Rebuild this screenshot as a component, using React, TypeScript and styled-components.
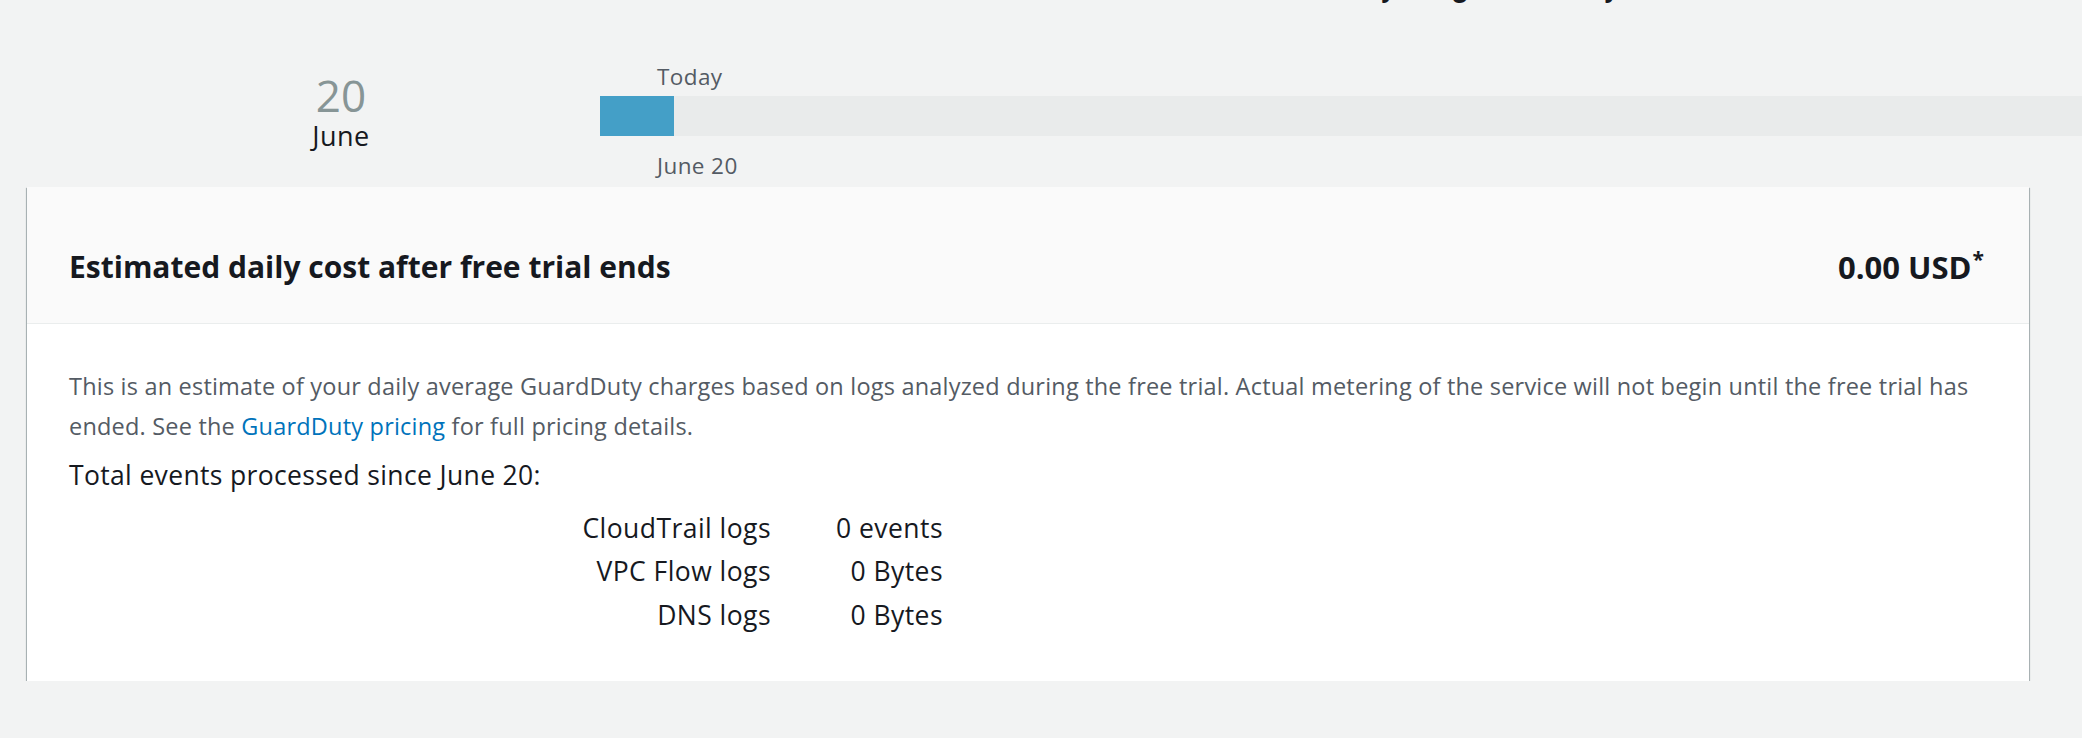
import React from "react";
import styled, { createGlobalStyle } from "styled-components";

const GlobalStyle = createGlobalStyle`
  html, body {
    margin: 0;
    padding: 0;
    background: #f2f3f3;
    font-family: "Open Sans", "Noto Sans", Arial, sans-serif;
    color: #16191f;
    overflow: hidden;
  }
`;

const Page = styled.div`
  display: flex;
  flex-direction: column;
  width: 2082px;
`;

const PeekHeading = styled.h2`
  margin: -31px 0 0 0;
  padding-left: 1262px;
  font-family: Roboto, Arial, sans-serif;
  font-size: 30px;
  line-height: 36px;
  font-weight: 700;
  color: #16191f;
  white-space: nowrap;
`;

const TimelineRow = styled.div`
  display: flex;
  align-items: flex-start;
`;

const DateBlock = styled.div`
  box-sizing: border-box;
  width: 600px;
  padding-left: 82px;
  margin-top: 65px;
  display: flex;
  flex-direction: column;
  align-items: center;
`;

const DayNumber = styled.div`
  font-size: 44px;
  line-height: 50px;
  color: #879596;
`;

const MonthName = styled.div`
  font-size: 27px;
  line-height: 30px;
  letter-spacing: 0.5px;
  color: #16191f;
  margin-top: 1px;
`;

const Timeline = styled.div`
  flex: 1;
  margin-top: 57.5px;
  display: flex;
  flex-direction: column;
`;

const TimelineLabel = styled.div<{ $gap: number }>`
  padding-left: 57px;
  margin-top: ${(p) => p.$gap}px;
  font-size: 22.5px;
  line-height: 28px;
  letter-spacing: 0.4px;
  color: #545b64;
`;

const Track = styled.div`
  height: 40px;
  margin-top: 5.5px;
  background: #e9ebeb;
  display: flex;
`;

const Progress = styled.div`
  height: 100%;
  background: #449fc7;
`;

const Card = styled.section`
  margin: 6.5px 53px 0 27px;
  background: #ffffff;
  box-shadow: 0 1px 1px 0 rgba(0, 28, 36, 0.6),
    0 2px 1px 0 rgba(0, 28, 36, 0.15),
    1px 1px 1px 0 rgba(0, 28, 36, 0.2),
    -1px 1px 1px 0 rgba(0, 28, 36, 0.2);
`;

const CardHeader = styled.header`
  display: flex;
  justify-content: space-between;
  align-items: flex-start;
  padding: 60px 45px 36px 42px;
  background: #fafafa;
  border-bottom: 1px solid #eaeded;
`;

const CardTitle = styled.h2`
  margin: 0;
  font-size: 30px;
  line-height: 40px;
  font-weight: 700;
  color: #16191f;
`;

const Cost = styled.div`
  font-size: 31px;
  line-height: 40px;
  font-weight: 700;
  color: #16191f;
  white-space: nowrap;

  sup {
    font-size: 21px;
    line-height: 0;
    vertical-align: 12px;
    margin-left: 1px;
  }
`;

const CardBody = styled.div`
  padding: 42px 42px 44px 42px;
`;

const Description = styled.p`
  margin: 0;
  font-size: 23.5px;
  line-height: 40px;
  letter-spacing: 0.2px;
  color: #545b64;
`;

const Link = styled.a`
  color: #0073bb;
  text-decoration: none;
`;

const TotalsHeading = styled.div`
  margin-top: 11px;
  font-size: 26.5px;
  line-height: 36px;
  letter-spacing: 0.35px;
  color: #16191f;
`;

const StatsGrid = styled.div`
  margin-top: 14px;
  display: grid;
  grid-template-columns: 702px 172px;
  font-size: 26.5px;
  line-height: 43.5px;
  letter-spacing: 0.45px;
  color: #16191f;
`;

const StatCell = styled.div`
  text-align: right;
  white-space: nowrap;
`;

const stats = [
  { label: "CloudTrail logs", value: "0 events" },
  { label: "VPC Flow logs", value: "0 Bytes" },
  { label: "DNS logs", value: "0 Bytes" },
];

export default function App() {
  return (
    <>
      <GlobalStyle />
      <Page>
        <PeekHeading>Your daily usage summary</PeekHeading>
        <TimelineRow>
          <DateBlock>
            <DayNumber>20</DayNumber>
            <MonthName>June</MonthName>
          </DateBlock>
          <Timeline>
            <TimelineLabel $gap={0}>Today</TimelineLabel>
            <Track>
              <Progress style={{ width: 74 }} />
            </Track>
            <TimelineLabel $gap={16.3}>June 20</TimelineLabel>
          </Timeline>
        </TimelineRow>
        <Card>
          <CardHeader>
            <CardTitle>Estimated daily cost after free trial ends</CardTitle>
            <Cost>
              0.00 USD<sup>*</sup>
            </Cost>
          </CardHeader>
          <CardBody>
            <Description>
              This is an estimate of your daily average GuardDuty charges based on logs
              analyzed during the free trial. Actual metering of the service will not
              begin until the free trial has ended. See the{" "}
              <Link href="#">GuardDuty pricing</Link> for full pricing details.
            </Description>
            <TotalsHeading>Total events processed since June 20:</TotalsHeading>
            <StatsGrid>
              {stats.map((s) => (
                <React.Fragment key={s.label}>
                  <StatCell>{s.label}</StatCell>
                  <StatCell>{s.value}</StatCell>
                </React.Fragment>
              ))}
            </StatsGrid>
          </CardBody>
        </Card>
      </Page>
    </>
  );
}
